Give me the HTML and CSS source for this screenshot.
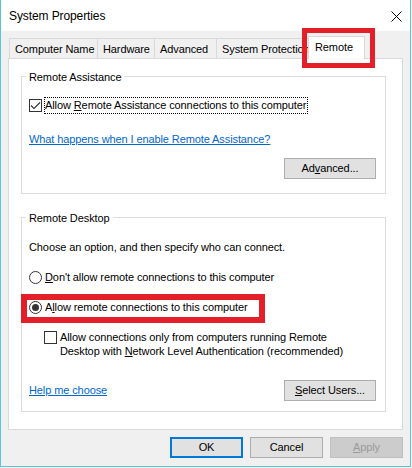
FILE: index.html
```html
<!DOCTYPE html>
<html lang="en">
<head>
<meta charset="utf-8">
<title>System Properties</title>
<link rel="stylesheet" href="styles.css">
</head>
<body>
<div class="window">
  <div class="titlebar">
    <span class="title">System Properties</span>
    <svg class="close" width="11" height="11" viewBox="0 0 11 11"><path d="M0.5 0.5 L10.5 10.5 M10.5 0.5 L0.5 10.5" stroke="#000" stroke-width="1" fill="none"/></svg>
  </div>
  <div class="client">
    <div class="tabs">
      <div class="tab t1">Computer Name</div>
      <div class="tab t2">Hardware</div>
      <div class="tab t3">Advanced</div>
      <div class="tab t4">System Protection</div>
      <div class="tab active">Remote</div>
    </div>
    <div class="panel">
      <div class="group g1">
        <div class="group-title">Remote Assistance</div>
        <div class="check-row">
          <span class="checkbox"><svg width="11" height="11" viewBox="0 0 11 11"><path d="M1 5.5 L4 8.5 L10 2.5" stroke="#333" stroke-width="1.1" fill="none"/></svg></span>
          <span class="focus">Allow <u>R</u>emote Assistance connections to this computer</span>
        </div>
        <a class="link ra-link">What happens when I enable Remote Assistance?</a>
        <button class="btn wide adv">Ad<u>v</u>anced...</button>
      </div>
      <div class="group g2">
        <div class="group-title">Remote Desktop</div>
        <div class="text choose">Choose an option, and then specify who can connect.</div>
        <div class="radio-row r1"><span class="radio"></span><span><u>D</u>on't allow remote connections to this computer</span></div>
        <div class="radio-row r2"><span class="radio checked"></span><span>A<u>l</u>low remote connections to this computer</span></div>
        <div class="nla-row">
          <span class="checkbox"></span>
          <span class="nla-text">Allow connections only from computers running Remote<br>Desktop with <u>N</u>etwork Level Authentication (recommended)</span>
        </div>
        <div class="bottom-row">
          <a class="link">Help me choose</a>
          <button class="btn wide"><u>S</u>elect Users...</button>
        </div>
      </div>
    </div>
    <div class="actions">
      <button class="btn default">OK</button>
      <button class="btn">Cancel</button>
      <button class="btn disabled"><u>A</u>pply</button>
    </div>
  </div>
  <div class="hl hl-tab"></div>
  <div class="hl hl-radio"></div>
</div>
</body>
</html>
```

FILE: styles.css
```css
html, body {
  margin: 0;
  background: #ffffff;
}
body {
  font-family: "Liberation Sans", Arial, sans-serif;
  font-size: 11px;
  letter-spacing: -0.1px;
  color: #000;
  line-height: 15px;
}
.window {
  position: relative;
  width: 411px;
  height: 467px;
  box-sizing: border-box;
  border: 1px solid #5bc5d6;
  border-top: none;
  display: flex;
  flex-direction: column;
}
.titlebar {
  height: 31px;
  flex-shrink: 0;
  background: #fff;
  display: flex;
  align-items: center;
  justify-content: space-between;
  padding: 1px 8px 0 8px;
  box-sizing: border-box;
}
.title {
  font-size: 12px;
  letter-spacing: -0.1px;
}
.close {
  display: block;
}
.client {
  flex: 1;
  background: #f0f0f0;
  padding: 5px 7px 0 7px;
  display: flex;
  flex-direction: column;
}
.tabs {
  height: 22px;
  display: flex;
  align-items: flex-end;
  padding-left: 1px;
  flex-shrink: 0;
}
.tab {
  height: 20px;
  box-sizing: border-box;
  border: 1px solid #d9d9d9;
  border-bottom: none;
  background: #f0f0f0;
  display: flex;
  align-items: center;
  padding-left: 5px;
  padding-top: 2px;
  margin-right: -1px;
  white-space: nowrap;
  overflow: hidden;
  flex-shrink: 0;
}
.t1 { width: 89px; }
.t2 { width: 58px; }
.t3 { width: 63px; }
.t4 { width: 95px; }
.tab.active {
  position: relative;
  z-index: 2;
  width: 57px;
  height: 23px;
  margin-left: -2px;
  margin-bottom: -1px;
  padding-left: 6px;
  padding-top: 0;
  padding-bottom: 2px;
  background: #fff;
}
.panel {
  height: 372px;
  flex-shrink: 0;
  box-sizing: border-box;
  border: 1px solid #d9d9d9;
  background: #fff;
  padding: 17px 16px 0 12px;
}
.group {
  border: 1px solid #dcdcdc;
  padding: 0 9px 14px 7px;
  display: flex;
  flex-direction: column;
}
.g2 {
  margin-top: 23px;
  padding-bottom: 10px;
}
.group-title {
  align-self: flex-start;
  margin-top: -7px;
  margin-left: -3px;
  padding: 0 3px;
  background: #fff;
  line-height: 15px;
}
.check-row {
  margin-top: 12px;
  display: flex;
  align-items: center;
  height: 17px;
}
.checkbox {
  width: 13px;
  height: 13px;
  box-sizing: border-box;
  border: 1px solid #333;
  background: #fff;
  display: flex;
  align-items: center;
  justify-content: center;
  flex-shrink: 0;
}
.check-row .checkbox {
  margin-right: 2px;
}
.focus {
  border: 1px dotted #000;
  padding: 0 1px 0 0;
  line-height: 15px;
}
.link {
  color: #0066cc;
  text-decoration: underline;
  line-height: 15px;
}
.ra-link {
  margin-top: 18px;
  align-self: flex-start;
}
.btn {
  width: 73px;
  height: 21px;
  box-sizing: border-box;
  border: 1px solid #adadad;
  background: #e1e1e1;
  font: inherit;
  letter-spacing: inherit;
  color: #000;
  padding: 0;
  margin: 0;
  line-height: 19px;
}
.btn.wide {
  width: 92px;
}
.adv {
  margin-top: 11px;
  align-self: flex-end;
}
.choose {
  margin-top: 14px;
}
.radio-row {
  display: flex;
  align-items: center;
  height: 15px;
  margin-top: 15px;
}
.radio {
  width: 13px;
  height: 13px;
  box-sizing: border-box;
  border: 1px solid #333;
  border-radius: 50%;
  background: #fff;
  margin-right: 3px;
  display: flex;
  align-items: center;
  justify-content: center;
  flex-shrink: 0;
}
.radio.checked::after {
  content: "";
  width: 7px;
  height: 7px;
  border-radius: 50%;
  background: #333;
}
.nla-row {
  margin-top: 15px;
  display: flex;
  align-items: flex-start;
  padding-left: 15px;
}
.nla-row .checkbox {
  margin-top: 1px;
  margin-right: 3px;
}
.nla-text {
  line-height: 14px;
}
.bottom-row {
  margin-top: 22px;
  display: flex;
  justify-content: space-between;
  align-items: center;
}
.actions {
  margin-top: 7px;
  display: flex;
  justify-content: flex-end;
  gap: 7px;
}
.btn.default {
  border-color: #0078d7;
  box-shadow: inset 0 0 0 1px #0078d7;
}
.btn.disabled {
  background: #cccccc;
  border-color: #bfbfbf;
  color: #9a9a9a;
}
.hl {
  position: absolute;
  box-sizing: border-box;
  border: 5px solid #e3202a;
}
.hl-tab {
  left: 301px;
  top: 28px;
  width: 73px;
  height: 40px;
}
.hl-radio {
  left: 20px;
  top: 294px;
  width: 244px;
  height: 29px;
  border-width: 6px;
}
```
